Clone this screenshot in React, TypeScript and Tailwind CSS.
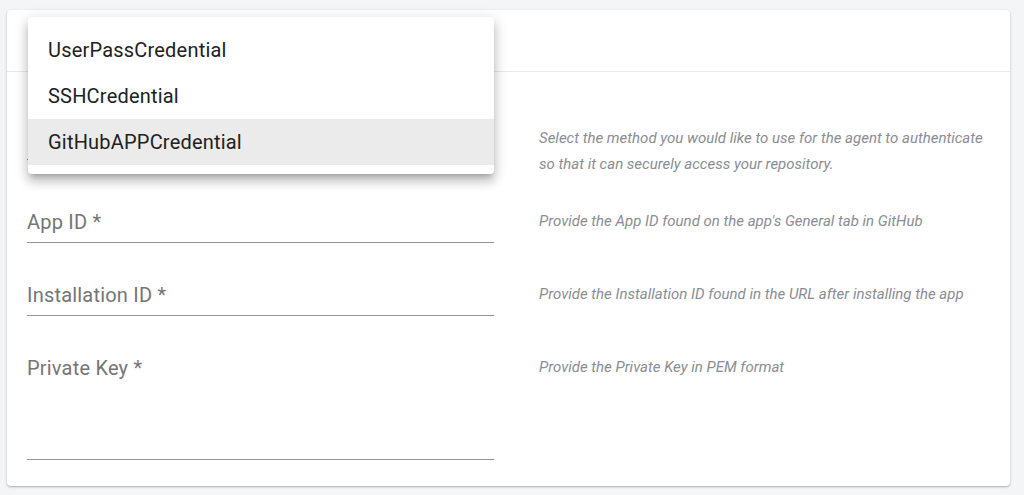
import React from "react";

type Row = {
    label: string;
    help: string[];
    height: string;
};

const rows: Row[] = [
    {
        label: "App ID *",
        help: ["Provide the App ID found on the app's General tab in GitHub"],
        height: "h-[39px]",
    },
    {
        label: "Installation ID *",
        help: ["Provide the Installation ID found in the URL after installing the app"],
        height: "h-[39px]",
    },
    {
        label: "Private Key *",
        help: ["Provide the Private Key in PEM format"],
        height: "h-[110px]",
    },
];

const options = ["UserPassCredential", "SSHCredential", "GitHubAPPCredential"];

export default function App() {
    return (
        <div
            className="relative min-h-[495px] w-[1024px] bg-[#f4f5f7] pt-[10px] pl-[7px]"
            style={{ fontFamily: "Roboto, 'Noto Sans', sans-serif" }}
        >
            <div className="h-[476px] w-[1003px] rounded-[4px] bg-white shadow-[0_1px_3px_rgba(0,0,0,0.2),0_1px_1px_rgba(0,0,0,0.12)]">
                <div className="h-[62px] border-b border-[#e8e8e8]" />

                <div className="flex flex-col px-[20px]">
                    {/* select, hidden by the open menu */}
                    <div className="flex h-[98px] items-start gap-[45px] pt-[26px]">
                        <div className="h-[62px] w-[467px] shrink-0 border-b border-[#949494]" />
                        <p className="pt-[27px] text-[15px] italic leading-[26px] text-[#8a8d93]">
                            Select the method you would like to use for the agent to authenticate
                            <br />
                            so that it can securely access your repository.
                        </p>
                    </div>

                    {rows.map((row, i) => (
                        <div key={i} className="mt-[34px] flex gap-[45px]">
                            <div className={`${row.height} w-[467px] shrink-0 border-b border-[#949494] pt-[6px]`}>
                                <span className="text-[20px] leading-[24px] tracking-[0.01em] text-[#757575]">{row.label}</span>
                            </div>
                            <div className="pt-[4px]">
                                {row.help.map((line) => (
                                    <p key={line} className="text-[15px] italic leading-[26px] text-[#8a8d93]">
                                        {line}
                                    </p>
                                ))}
                            </div>
                        </div>
                    ))}
                </div>
            </div>

            {/* open menu */}
            <div className="absolute left-[28px] top-[17px] w-[466px] rounded-[4px] bg-white pt-[10px] pb-[9px] shadow-[0_5px_5px_-3px_rgba(0,0,0,0.2),0_8px_10px_1px_rgba(0,0,0,0.14),0_3px_14px_2px_rgba(0,0,0,0.12)]">
                {options.map((opt, i) => (
                    <div
                        key={opt}
                        className={`flex h-[46px] items-center px-[20px] text-[20px] tracking-[0.01em] text-[#212121] ${i === 2 ? "bg-[#ebebeb]" : ""}`}
                    >
                        {opt}
                    </div>
                ))}
            </div>
        </div>
    );
}
